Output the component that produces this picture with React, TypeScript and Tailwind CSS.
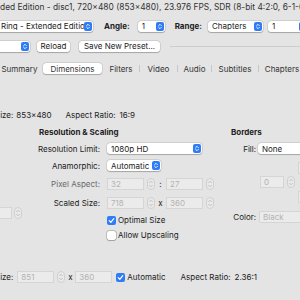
const raised = 'bg-white rounded-[3px] shadow-[0_0_0_0.5px_rgba(0,0,0,0.14),0_0.5px_1px_rgba(0,0,0,0.22)]'

function BlueStepper() {
  return (
    <svg width="8" height="9" viewBox="0 0 8 9" className="shrink-0">
      <rect width="8" height="9" rx="2" fill="#2f7cf6" />
      <path d="M2.6 3.7L4 2.3l1.4 1.4M2.6 5.3L4 6.7l1.4-1.4" fill="none" stroke="#fff" strokeWidth="0.9" strokeLinecap="round" strokeLinejoin="round" />
    </svg>
  )
}

function SmallStepper() {
  return (
    <svg width="8" height="12" viewBox="0 0 8 12" className="shrink-0">
      <rect x="0.5" y="0.5" width="7" height="11" rx="3.5" fill="#e9e9e9" stroke="#d0d0d0" />
      <path d="M2.7 4.6L4 3.3l1.3 1.3M2.7 7.4L4 8.7l1.3-1.3" fill="none" stroke="#b0b0b0" strokeWidth="0.8" strokeLinecap="round" strokeLinejoin="round" />
    </svg>
  )
}

function Popup({ label, className = '' }: { label: string; className?: string }) {
  return (
    <div className={`${raised} flex h-[11px] items-center pl-[4px] pr-[1px] shrink-0 ${className}`}>
      <span className="flex-1 overflow-hidden whitespace-nowrap">{label}</span>
      <BlueStepper />
    </div>
  )
}

function Field({ value, className = '' }: { value?: string; className?: string }) {
  return (
    <div className={`h-[12px] flex items-center px-[3px] bg-[#ebebeb] border border-[#d5d5d5] text-[#b3b3b3] shrink-0 ${className}`}>
      {value}
    </div>
  )
}

function NumField({ value, width = 'w-[37px]' }: { value: string; width?: string }) {
  return (
    <div className="flex items-center gap-[3px]">
      <Field value={value} className={width} />
      <SmallStepper />
    </div>
  )
}

function Check({ checked }: { checked: boolean }) {
  return checked ? (
    <svg width="9" height="9" viewBox="0 0 9 9" className="shrink-0">
      <rect width="9" height="9" rx="2" fill="#2f7cf6" />
      <path d="M2.2 4.7l1.6 1.6 3-3.6" fill="none" stroke="#fff" strokeWidth="1.2" strokeLinecap="round" strokeLinejoin="round" />
    </svg>
  ) : (
    <div className="w-[9px] h-[9px] rounded-[2px] bg-white shadow-[0_0_0_0.5px_rgba(0,0,0,0.32),0_0.5px_1px_rgba(0,0,0,0.15)] shrink-0" />
  )
}

function Sep() {
  return <div className="w-px h-[7px] bg-[#c6c6c6] shrink-0" />
}

function Tab({ label, width }: { label: string; width: string }) {
  return <div className={`${width} text-center shrink-0 whitespace-nowrap`}>{label}</div>
}

function Row({ label, children, className = '' }: { label: string; children: React.ReactNode; className?: string }) {
  return (
    <div className={`flex items-center ${className}`}>
      <div className="w-[70px] text-right whitespace-nowrap">{label}</div>
      <div className="ml-[7px] flex items-center">{children}</div>
    </div>
  )
}

export default function App() {
  return (
    <div className="w-[300px] h-[300px] overflow-hidden bg-[#e4e4e4] text-[#222] text-[8px] leading-none font-['Inter',sans-serif]">
      {/* Title info */}
      <div className="h-[14px] flex items-center whitespace-nowrap text-[#333] text-[8.4px]">
        ded Edition - disc1, 720x480 (853x480), 23.976 FPS, SDR (8-bit 4:2:0, 6-1-6), 1 Audio Track
      </div>

      {/* Title / angle / range */}
      <div className="mt-[6px] h-[12px] flex items-center whitespace-nowrap">
        <Popup label="Ring - Extended Edition" className="w-[100px] -ml-[7px] pl-[8px]" />
        <span className="ml-[11px] font-bold">Angle:</span>
        <Popup label="1" className="ml-[8px] w-[27px]" />
        <span className="ml-[10px] font-bold">Range:</span>
        <Popup label="Chapters" className="ml-[6px] w-[55px]" />
        <Popup label="1" className="ml-[5px] w-[40px]" />
      </div>

      {/* Preset row */}
      <div className="mt-[8px] h-[12px] flex items-center whitespace-nowrap">
        <Popup label="" className="w-[40px] -ml-[10px]" />
        <button className={`${raised} ml-[7px] h-[11px] w-[33px]`}>Reload</button>
        <button className={`${raised} ml-[9px] h-[11px] w-[81px]`}>Save New Preset...</button>
        <div className="ml-[10px] flex-1 h-px bg-[#cdcdcd]" />
      </div>

      {/* Tabs */}
      <div className="mt-[11px] h-[11px] flex items-center -ml-[3px] text-[#333]">
        <Tab label="Summary" width="w-[45px]" />
        <div className={`${raised} ml-px h-[11px] w-[59px] flex items-center justify-center shrink-0`}>Dimensions</div>
        <div className="ml-px" />
        <Tab label="Filters" width="w-[36px]" />
        <Sep />
        <Tab label="Video" width="w-[37px]" />
        <Sep />
        <Tab label="Audio" width="w-[33px]" />
        <Sep />
        <Tab label="Subtitles" width="w-[46px]" />
        <Sep />
        <Tab label="Chapters" width="w-[46px]" />
      </div>

      {/* Source dimensions */}
      <div className="mt-[35px] h-[12px] flex items-center whitespace-nowrap">
        <span className="-ml-[5px]">Size:</span>
        <span className="ml-[3px]">853x480</span>
        <span className="ml-[14px]">Aspect Ratio:</span>
        <span className="ml-[4px]">16:9</span>
      </div>

      {/* Sections */}
      <div className="mt-[5px] flex">
        {/* Orientation & Cropping (clipped) */}
        <div className="w-[30px] shrink-0">
          <div className="mt-[81px] flex items-center gap-[2px] -ml-[10px]">
            <Field className="w-[22px] h-[11px]" />
            <SmallStepper />
          </div>
        </div>

        {/* Resolution & Scaling */}
        <div className="w-[195px] shrink-0">
          <div className="h-[12px] flex items-center pl-[9px] font-bold">Resolution &amp; Scaling</div>
          <Row label="Resolution Limit:" className="mt-[5px] h-[11px]">
            <Popup label="1080p HD" className="w-[95px]" />
          </Row>
          <Row label="Anamorphic:" className="mt-[6px] h-[11px]">
            <Popup label="Automatic" className="w-[54px]" />
          </Row>
          <Row label="Pixel Aspect:" className="mt-[7px] h-[12px] text-[#6a6a6a]">
            <NumField value="32" />
            <span className="w-[11px] text-center text-[#222]">:</span>
            <NumField value="27" />
          </Row>
          <Row label="Scaled Size:" className="mt-[7px] h-[12px]">
            <NumField value="718" />
            <span className="w-[11px] text-center">x</span>
            <NumField value="360" />
          </Row>
          <div className="mt-[6px] h-[10px] flex items-center pl-[77px] gap-[2px] whitespace-nowrap">
            <Check checked />
            <span>Optimal Size</span>
          </div>
          <div className="mt-[5px] h-[10px] flex items-center pl-[77px] gap-[2px] whitespace-nowrap">
            <Check checked={false} />
            <span>Allow Upscaling</span>
          </div>
        </div>

        {/* Borders */}
        <div className="flex-1">
          <div className="h-[12px] flex items-center pl-[6px] font-bold">Borders</div>
          <div className="mt-[5px] h-[11px] flex items-center">
            <div className="w-[31px] text-right">Fill:</div>
            <Popup label="None" className="ml-[2px] w-[70px]" />
          </div>
          <div className="mt-[8px] flex flex-col">
            <Field className="ml-[73px] w-[30px] h-[11px]" />
            <div className="mt-[2px] flex items-center gap-[3px] ml-[35px]">
              <Field value="0" className="w-[24px] h-[11px]" />
              <SmallStepper />
              <Field className="ml-[2px] w-[30px] h-[11px]" />
            </div>
            <Field className="mt-[3px] ml-[73px] w-[30px] h-[11px]" />
          </div>
          <div className="mt-[8px] h-[11px] flex items-center">
            <div className="w-[31px] text-right">Color:</div>
            <Field value="Black" className="ml-[3px] w-[70px] h-[11px] rounded-[2px]" />
          </div>
        </div>
      </div>

      {/* Final dimensions */}
      <div className="mt-[31px] h-[12px] flex items-center whitespace-nowrap">
        <span className="-ml-[5px]">Size:</span>
        <div className="ml-[4px]">
          <NumField value="851" />
        </div>
        <span className="w-[10px] text-center">x</span>
        <Field value="360" className="w-[37px]" />
        <div className="ml-[4px] flex items-center gap-[2px]">
          <Check checked />
          <span>Automatic</span>
        </div>
        <span className="ml-[15px]">Aspect Ratio:</span>
        <span className="ml-[4px]">2.36:1</span>
      </div>
    </div>
  )
}
